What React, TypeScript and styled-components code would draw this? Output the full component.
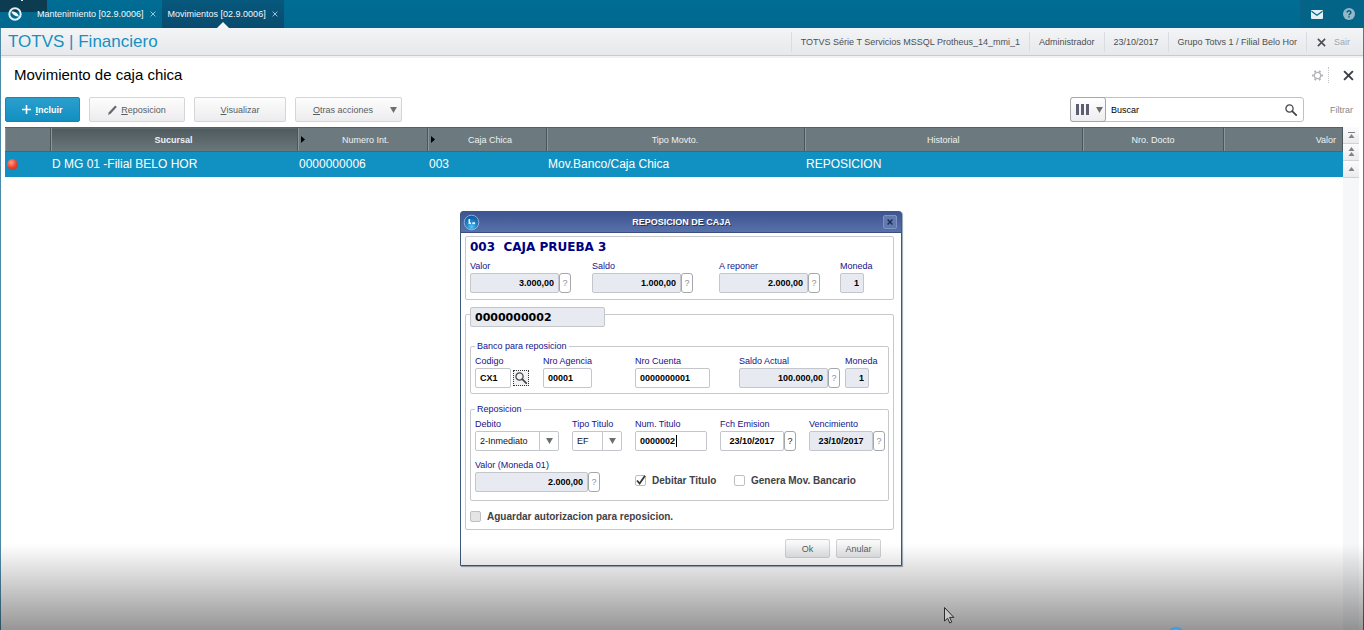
import React from "react";
import styled, { createGlobalStyle, css } from "styled-components";

const GlobalStyle = createGlobalStyle`
  *, *::before, *::after { box-sizing: border-box; }
  body { margin: 0; overflow: hidden; background: #fff; }
  body, button, input, select {
    font-family: "Liberation Sans", Arial, sans-serif;
    font-size: 9px;
  }
  button { cursor: pointer; }
`;

const Page = styled.div`
  display: flex;
  flex-direction: column;
  min-height: 100vh;
  border-left: 1px solid #4d8aa8;
  border-right: 1px solid #2f86a6;
  color: #4c4f54;
`;

/* ---------- Top bar ---------- */
const TopBar = styled.header`
  display: flex;
  height: 28px;
  margin: 0 -1px;
  background: linear-gradient(#006d94, #00688f);
`;

const Brand = styled.div`
  display: flex;
  align-items: center;
  width: 31px;
  padding-left: 8px;
  border-right: 1px solid #0a6286;
  svg { position: relative; z-index: 1; }
`;

const Tab = styled.div<{ $active?: boolean }>`
  display: flex;
  align-items: center;
  gap: 6px;
  padding: 0 6px;
  background: ${(p) => (p.$active ? "linear-gradient(#06597d, #0a4b6d)" : "transparent")};
  position: relative;
  ${(p) =>
    p.$active &&
    css`
      &::after {
        content: "";
        position: absolute;
        left: calc(50% - 6px);
        bottom: 0;
        border: 6px solid transparent;
        border-top: 0;
        border-bottom-color: #f4f6f8;
      }
    `}
`;

const TabLink = styled.a`
  color: #f2f8fb;
  text-decoration: none;
  white-space: nowrap;
`;

const TabClose = styled.button`
  display: flex;
  padding: 0;
  border: 0;
  background: none;
  color: #a9d0e0;
`;

const TopIcons = styled.div`
  display: flex;
  margin-left: auto;
`;

const TopIcon = styled.button`
  display: flex;
  align-items: center;
  justify-content: center;
  width: 32px;
  padding: 0;
  border: 0;
  border-left: 1px solid #08628a;
  background: #036488;
`;

const CornerShade = styled.div`
  position: absolute;
  top: 0;
  left: 0;
  width: 47px;
  height: 12px;
  background: rgba(18, 42, 56, 0.72);
  &::after {
    content: "";
    position: absolute;
    top: 0;
    left: 21px;
    width: 2px;
    height: 1px;
    background: #dfe6ea;
  }
`;

/* ---------- Module header ---------- */
const ModuleBar = styled.div`
  display: flex;
  align-items: center;
  height: 30px;
  padding: 0 2px 0 7px;
  border-bottom: 2px solid #eff1f3;
  background: linear-gradient(#f3f4f6, #e6e8eb);
  box-shadow: inset 0 -1px #c5ccd3;
`;

const ModuleName = styled.div`
  flex: 1;
  color: #1591c2;
  font-size: 17px;
  line-height: 20px;
`;

const Info = styled.span`
  padding: 0 9px;
  border-left: 1px solid #d9dde1;
  line-height: 20px;
  white-space: nowrap;
`;

const ExitButton = styled.button`
  display: flex;
  align-items: center;
  gap: 8px;
  height: 20px;
  padding: 0 11px 0 10px;
  border: 0;
  border-left: 1px solid #d9dde1;
  background: none;
  color: #a3a7ac;
`;

const TitleRow = styled.div`
  display: flex;
  align-items: center;
  height: 34px;
  padding: 0 9px 0 13px;
`;

const Title = styled.h1`
  flex: 1;
  margin: 0;
  color: #000;
  font-size: 15px;
  font-weight: 400;
  line-height: 18px;
`;

const IconButton = styled.button`
  display: flex;
  align-items: center;
  padding: 0;
  border: 0;
  background: none;
`;

const DottedRule = styled.span`
  height: 16px;
  margin: 0 14px 0 5px;
  border-left: 1px dotted #c4c4c4;
`;

/* ---------- Toolbar ---------- */
const Toolbar = styled.div`
  display: flex;
  align-items: center;
  gap: 9px;
  margin: 5px 0;
  padding: 0 10px 0 4px;
`;

const ToolButton = styled.button<{ $width: number; $primary?: boolean }>`
  display: flex;
  align-items: center;
  justify-content: center;
  gap: 4px;
  width: ${(p) => p.$width}px;
  height: 25px;
  padding: 0 4px;
  border: 1px solid ${(p) => (p.$primary ? "#1387b5" : "#d3d5d8")};
  border-radius: 2px;
  background: ${(p) =>
    p.$primary ? "linear-gradient(#2a9fce, #128fc0)" : "linear-gradient(#fdfdfd, #ececee)"};
  color: ${(p) => (p.$primary ? "#fff" : "#5a5d62")};
  font-weight: ${(p) => (p.$primary ? 700 : 400)};
`;

const Grow = styled.span`
  flex: 1;
`;

const SearchBox = styled.div`
  display: flex;
  width: 234px;
  height: 25px;
  margin-left: auto;
  border: 1px solid #bfc1c4;
  border-radius: 3px;
  background: #fff;
`;

const ColumnPicker = styled.button`
  display: flex;
  align-items: center;
  gap: 6px;
  width: 36px;
  margin: -1px 0 -1px -1px;
  padding: 0 0 0 5px;
  border: 1px solid #a4a6aa;
  border-radius: 3px;
  background: linear-gradient(#fff, #ededf0);
`;

const SearchInput = styled.input`
  flex: 1;
  min-width: 0;
  padding: 0 5px;
  border: 0;
  outline: 0;
  background: none;
  color: #000;
  &::placeholder { color: #000; opacity: 1; }
`;

const SearchButton = styled(IconButton)`
  padding-right: 6px;
`;

const FilterLink = styled.a`
  margin-left: 17px;
  color: #85888c;
  text-decoration: none;
`;

/* ---------- Browse table ---------- */
const Browse = styled.main`
  display: flex;
  flex: 1;
  padding: 0 4px;
`;

const TableArea = styled.div`
  flex: 1;
`;

const Table = styled.table`
  width: 100%;
  table-layout: fixed;
  border-collapse: collapse;
`;

const Th = styled.th<{ $sorted?: boolean; $align?: string }>`
  height: 24px;
  padding: 0 6px;
  border-right: 1px solid #4a5659;
  border-top: 1px solid #566164;
  border-bottom: 1px solid #566164;
  background: ${(p) => (p.$sorted ? "linear-gradient(#4e5a5d, #6a777b)" : "#6c7a7f")};
  box-shadow: inset 1px 0 #89969a;
  color: #eef2f3;
  font-weight: ${(p) => (p.$sorted ? 700 : 400)};
  text-align: ${(p) => p.$align ?? "center"};
`;

const ThInner = styled.span`
  display: flex;
  align-items: center;
  gap: 6px;
  margin-left: -3px;
`;

const Td = styled.td`
  height: 25px;
  padding: 0 2px;
  background: #1191c1;
  color: #fff;
  font-size: 12px;
  white-space: nowrap;
`;

const StatusDot = styled.span`
  display: block;
  width: 11px;
  height: 11px;
  border-radius: 50%;
  background: radial-gradient(circle at 38% 32%, #ff9d86, #ec4331 50%, #b52a20);
`;

const ScrollTrack = styled.div`
  width: 16px;
  background: #f6f7f9;
`;

const ScrollButton = styled.button`
  display: flex;
  align-items: center;
  justify-content: center;
  width: 100%;
  height: 17px;
  padding: 0;
  border: 0;
  border-bottom: 1px solid #d0d2d4;
  background: linear-gradient(#fbfbfb, #ebebed);
`;

/* ---------- Dialog ---------- */
const Dialog = styled.section`
  position: absolute;
  top: 211px;
  left: calc(50% - 222px);
  width: 442px;
  border: 1px solid #3d5a7c;
  border-radius: 3px 3px 0 0;
  background: #fff;
  box-shadow: 1px 1px 1px #9aa9b8;
`;

const DialogBar = styled.div`
  display: flex;
  align-items: center;
  height: 21px;
  padding: 0 4px 0 2px;
  border-bottom: 1px solid #3a4f80;
  background: linear-gradient(#3c5590, #5871ab);
`;

const DialogTitle = styled.h2`
  flex: 1;
  margin: 0;
  color: #fff;
  font-size: 9px;
  text-align: center;
  text-shadow: 1px 1px #26345a;
`;

const DialogClose = styled.button`
  display: flex;
  align-items: center;
  justify-content: center;
  width: 14px;
  height: 14px;
  padding: 0;
  border: 1px solid #7f93c2;
  border-radius: 2px;
  background: #6179af;
`;

const DialogBody = styled.form`
  padding: 3px 7px 7px 4px;
`;

const Panel = styled.div`
  border: 1px solid #c6c8cb;
  border-radius: 2px;
  padding: 4px 4px 6px;
  & + & {
    margin-top: 14px;
    padding-top: 0;
    padding-bottom: 7px;
  }
`;

const CashName = styled.h3`
  margin: 0 0 8px;
  color: #000080;
  font: 700 12px/12px "DejaVu Sans", sans-serif;
  white-space: pre;
`;

const NumberBox = styled.input`
  display: block;
  width: 135px;
  height: 20px;
  margin-top: -8px;
  padding: 0 4px;
  border: 1px solid #c3c6ca;
  border-radius: 2px;
  background: #e7eaf1;
  color: #000;
  font: 700 11px "DejaVu Sans", sans-serif;
`;

const Group = styled.fieldset`
  min-width: 0;
  margin: 14px 0 0;
  padding: 5px 4px;
  border: 1px solid #c6c8cb;
  border-radius: 2px;
  & + & { margin-top: 10px; padding-bottom: 8px; }
`;

const Legend = styled.legend`
  padding: 0 2px;
  color: #14148c;
  line-height: 10px;
`;

const FieldGrid = styled.div<{ $columns: string }>`
  display: grid;
  grid-template-columns: ${(p) => p.$columns};
  & + & { margin-top: 9px; }
`;

const FieldBox = styled.div`
  display: flex;
  flex-direction: column;
  gap: 2px;
`;

const Label = styled.label`
  color: #14148c;
  line-height: 10px;
  white-space: nowrap;
`;

const Control = styled.div`
  display: flex;
  align-items: center;
`;

const inputFrame = css`
  height: 20px;
  border: 1px solid #c3c6ca;
  border-radius: 2px;
`;

const Input = styled.input<{ $width: number; $align?: string }>`
  ${inputFrame}
  width: ${(p) => p.$width}px;
  padding: 0 4px;
  outline: 0;
  background: #fff;
  color: #000;
  font-weight: 700;
  text-align: ${(p) => p.$align ?? "left"};
  &:read-only { background: #e7eaf1; }
`;

const HelpButton = styled.button<{ $strong?: boolean }>`
  width: 12px;
  height: 20px;
  padding: 0;
  border: 1px solid #a5a7aa;
  border-radius: 3px;
  background: #fff;
  color: ${(p) => (p.$strong ? "#222" : "#8f9195")};
`;

const LookupButton = styled.button`
  display: flex;
  align-items: center;
  justify-content: center;
  width: 16px;
  height: 16px;
  margin-left: 2px;
  padding: 0;
  border: 1px dotted #333;
  background: #f2f2f2;
`;

const CaretFrame = styled.div`
  ${inputFrame}
  display: flex;
  align-items: center;
  width: 72px;
  padding: 0 4px;
`;

const BareInput = styled.input`
  width: 36px;
  padding: 0;
  border: 0;
  outline: 0;
  color: #000;
  font-weight: 700;
`;

const Caret = styled.span`
  width: 1px;
  height: 12px;
  background: #000;
`;

const SelectFrame = styled.div<{ $width: number }>`
  ${inputFrame}
  display: flex;
  width: ${(p) => p.$width}px;
`;

const Select = styled.select`
  flex: 1;
  min-width: 0;
  padding: 0 4px;
  border: 0;
  outline: 0;
  appearance: none;
  background: none;
  color: #111;
`;

const SelectArrow = styled.span`
  display: flex;
  align-items: center;
  justify-content: center;
  width: 19px;
  border-left: 1px solid #c3c6ca;
`;

const CheckLabel = styled.label<{ $inRow?: boolean }>`
  display: flex;
  align-items: center;
  align-self: end;
  gap: 6px;
  height: 12px;
  margin: ${(p) => (p.$inRow ? "0 0 6px" : "9px 0 0")};
  color: #3f4247;
  font-size: 10px;
  font-weight: 700;
  white-space: nowrap;
`;

const CheckStack = styled.span`
  display: grid;
  & > * { grid-area: 1 / 1; }
  svg { pointer-events: none; }
`;

const CheckInput = styled.input`
  appearance: none;
  width: 11px;
  height: 11px;
  margin: 0;
  border: 1px solid #bdbfc3;
  border-radius: 2px;
  background: #fff;
  &:disabled { background: #e4e4e4; }
`;

const Actions = styled.div`
  display: flex;
  justify-content: flex-end;
  gap: 6px;
  margin-top: 9px;
  padding-right: 13px;
`;

const ActionButton = styled.button`
  width: 45px;
  height: 19px;
  padding: 0;
  border: 1px solid #cfd1d4;
  border-radius: 2px;
  background: linear-gradient(#fafafa, #e4e5e7);
  color: #5a5d62;
`;

/* ---------- Overlays ---------- */
const BottomShade = styled.div`
  position: fixed;
  inset: auto 0 0 0;
  height: 86px;
  background: linear-gradient(rgba(0, 0, 0, 0), rgba(0, 0, 0, 0.41));
  pointer-events: none;
`;

const Pointer = styled.svg`
  position: fixed;
  left: 943px;
  top: 606px;
  pointer-events: none;
`;

const ProgressKnob = styled.svg`
  position: fixed;
  left: 1167px;
  bottom: 0;
  pointer-events: none;
`;

const Cross = ({ size, color, weight = 1 }: { size: number; color: string; weight?: number }) => (
  <svg width={size} height={size} viewBox="0 0 10 10" stroke={color} strokeWidth={weight} aria-hidden="true">
    <path d="M1 1L9 9M9 1L1 9" />
  </svg>
);

const Triangle = ({ size = 7, color = "#6c6e72" }: { size?: number; color?: string }) => (
  <svg width={size} height={size - 1} viewBox="0 0 8 7" fill={color} aria-hidden="true">
    <path d="M0 0H8L4 7Z" />
  </svg>
);

const Magnifier = ({ size }: { size: number }) => (
  <svg width={size} height={size} viewBox="0 0 12 12" fill="none" stroke="#44474c" aria-hidden="true">
    <circle cx="4.5" cy="4.5" r="3.6" strokeWidth="1.3" />
    <path d="M7.2 7.2L11.2 11.2" strokeWidth="1.8" strokeLinecap="round" />
  </svg>
);

const SortMark = () => (
  <svg width="4" height="7" viewBox="0 0 4 7" aria-hidden="true">
    <path d="M0 0L4 3.5L0 7Z" fill="#000" />
  </svg>
);

interface FieldProps {
  id: string;
  label: string;
  value: string;
  width: number;
  align?: "right" | "center";
  locked?: boolean;
  help?: "soft" | "strong";
  children?: React.ReactNode;
}

const Field = ({ id, label, value, width, align, locked, help, children }: FieldProps) => (
  <FieldBox>
    <Label htmlFor={id}>{label}</Label>
    <Control>
      <Input id={id} defaultValue={value} $width={width} $align={align} readOnly={locked} />
      {help && (
        <HelpButton type="button" $strong={help === "strong"}>
          ?
        </HelpButton>
      )}
      {children}
    </Control>
  </FieldBox>
);

const Choice = ({ id, label, value, width }: { id: string; label: string; value: string; width: number }) => (
  <FieldBox>
    <Label htmlFor={id}>{label}</Label>
    <SelectFrame $width={width}>
      <Select id={id} defaultValue={value}>
        <option>{value}</option>
      </Select>
      <SelectArrow>
        <Triangle />
      </SelectArrow>
    </SelectFrame>
  </FieldBox>
);

const Check = ({ label, checked, disabled, inRow }: { label: string; checked?: boolean; disabled?: boolean; inRow?: boolean }) => (
  <CheckLabel $inRow={inRow}>
    <CheckStack>
      <CheckInput type="checkbox" defaultChecked={checked} disabled={disabled} />
      {checked && (
        <svg width="11" height="11" viewBox="0 0 11 11" fill="none" stroke="#34373b" strokeWidth="1.8" aria-hidden="true">
          <path d="M2 5.5L4.6 8.6L10 0.8" />
        </svg>
      )}
    </CheckStack>
    {label}
  </CheckLabel>
);

const ReplenishDialog = () => (
  <Dialog role="dialog" aria-label="REPOSICION DE CAJA">
    <DialogBar>
      <svg width="17" height="17" viewBox="0 0 17 17" aria-hidden="true">
        <defs>
          <radialGradient id="orb" cx="50%" cy="80%" r="75%">
            <stop offset="0" stopColor="#58c4f0" />
            <stop offset="0.45" stopColor="#2288cc" />
            <stop offset="1" stopColor="#0f56a0" />
          </radialGradient>
        </defs>
        <circle cx="8.5" cy="8.5" r="7.3" fill="url(#orb)" stroke="#a9bfdc" strokeWidth="0.8" />
        <path d="M6.3 5V9.2H8" stroke="#e9f7ff" strokeWidth="1.5" fill="none" />
        <path d="M9.3 9.2H12" stroke="#e9f7ff" strokeWidth="1.8" />
      </svg>
      <DialogTitle>REPOSICION DE CAJA</DialogTitle>
      <DialogClose type="button" aria-label="Cerrar">
        <Cross size={6} color="#1d2b52" weight={2.4} />
      </DialogClose>
    </DialogBar>
    <DialogBody>
      <Panel>
        <CashName>{"003  CAJA PRUEBA 3"}</CashName>
        <FieldGrid $columns="122px 127px 121px auto">
          <Field id="valor" label="Valor" value="3.000,00" width={89} align="right" locked help="soft" />
          <Field id="saldo" label="Saldo" value="1.000,00" width={89} align="right" locked help="soft" />
          <Field id="reponer" label="A reponer" value="2.000,00" width={89} align="right" locked help="soft" />
          <Field id="moneda" label="Moneda" value="1" width={24} align="right" locked />
        </FieldGrid>
      </Panel>
      <Panel>
        <NumberBox defaultValue="0000000002" readOnly aria-label="Numero" />
        <Group>
          <Legend>Banco para reposicion</Legend>
          <FieldGrid $columns="68px 92px 104px 106px auto">
            <Field id="codigo" label="Codigo" value="CX1" width={36}>
              <LookupButton type="button" aria-label="Consultar">
                <Magnifier size={12} />
              </LookupButton>
            </Field>
            <Field id="agencia" label="Nro Agencia" value="00001" width={49} />
            <Field id="cuenta" label="Nro Cuenta" value="0000000001" width={75} />
            <Field id="saldoActual" label="Saldo Actual" value="100.000,00" width={89} align="right" locked help="soft" />
            <Field id="monedaBanco" label="Moneda" value="1" width={24} align="right" locked />
          </FieldGrid>
        </Group>
        <Group>
          <Legend>Reposicion</Legend>
          <FieldGrid $columns="97px 63px 85px 89px auto">
            <Choice id="debito" label="Debito" value="2-Inmediato" width={84} />
            <Choice id="tipo" label="Tipo Titulo" value="EF" width={50} />
            <FieldBox>
              <Label htmlFor="titulo">Num. Titulo</Label>
              <CaretFrame>
                <BareInput id="titulo" defaultValue="0000002" />
                <Caret />
              </CaretFrame>
            </FieldBox>
            <Field id="emision" label="Fch Emision" value="23/10/2017" width={64} align="center" help="strong" />
            <Field id="vencimiento" label="Vencimiento" value="23/10/2017" width={64} align="center" locked help="soft" />
          </FieldGrid>
          <FieldGrid $columns="160px 99px auto">
            <Field id="valorMoneda" label="Valor (Moneda 01)" value="2.000,00" width={113} align="right" locked help="soft" />
            <Check label="Debitar Titulo" checked inRow />
            <Check label="Genera Mov. Bancario" inRow />
          </FieldGrid>
        </Group>
        <Check label="Aguardar autorizacion para reposicion." disabled />
      </Panel>
      <Actions>
        <ActionButton type="button">Ok</ActionButton>
        <ActionButton type="button">Anular</ActionButton>
      </Actions>
    </DialogBody>
  </Dialog>
);

export default function App() {
  return (
    <>
      <GlobalStyle />
      <CornerShade />
      <Page>
        <TopBar>
          <Brand>
            <svg width="14" height="14" viewBox="0 0 14 14" fill="none" aria-hidden="true">
              <circle cx="7" cy="7" r="5.7" stroke="#e4eef3" strokeWidth="2" />
              <path d="M3.2 4.6C6 4 10 6 11 9.6C8 9.8 4.6 8 3.2 4.6Z" fill="#f4fafc" />
            </svg>
          </Brand>
          <Tab>
            <TabLink href="#mantenimiento">Mantenimiento [02.9.0006]</TabLink>
            <TabClose aria-label="Cerrar Mantenimiento">
              <Cross size={6} color="#9fcadb" weight={1.6} />
            </TabClose>
          </Tab>
          <Tab $active>
            <TabLink href="#movimientos">Movimientos [02.9.0006]</TabLink>
            <TabClose aria-label="Cerrar Movimientos">
              <Cross size={6} color="#9fcadb" weight={1.6} />
            </TabClose>
          </Tab>
          <TopIcons>
            <TopIcon aria-label="Mensajes">
              <svg width="12" height="9" viewBox="0 0 12 9" aria-hidden="true">
                <rect width="12" height="9" rx="1" fill="#e3f1f6" />
                <path d="M0.5 1.2L6 5.2L11.5 1.2" fill="none" stroke="#036488" strokeWidth="1.1" />
              </svg>
            </TopIcon>
            <TopIcon aria-label="Ayuda">
              <svg width="12" height="12" viewBox="0 0 12 12" fill="none" aria-hidden="true">
                <circle cx="6" cy="6" r="6" fill="#93b8c8" />
                <path d="M4.1 4.6C4.1 2.2 7.9 2.2 7.9 4.5C7.9 5.8 6 5.8 6 7.3M6 8.3V9.6" stroke="#045a7b" strokeWidth="1.4" />
              </svg>
            </TopIcon>
          </TopIcons>
        </TopBar>

        <ModuleBar>
          <ModuleName>TOTVS | Financiero</ModuleName>
          <Info>TOTVS Série T Servicios MSSQL Protheus_14_mmi_1</Info>
          <Info>Administrador</Info>
          <Info>23/10/2017</Info>
          <Info>Grupo Totvs 1 / Filial Belo Hor</Info>
          <ExitButton>
            <Cross size={9} color="#4b4e54" weight={1.8} />
            Sair
          </ExitButton>
        </ModuleBar>

        <TitleRow>
          <Title>Movimiento de caja chica</Title>
          <IconButton aria-label="Configurar">
            <svg width="11" height="11" viewBox="0 0 11 11" fill="none" stroke="#b2b4b7" aria-hidden="true">
              <circle cx="5.5" cy="5.5" r="3.2" strokeWidth="1.3" />
              <path
                d="M9.2 5.5H11M0 5.5H1.8M7.35 8.7L8.2 10.2M2.8 0.8L3.65 2.3M7.35 2.3L8.2 0.8M2.8 10.2L3.65 8.7"
                strokeWidth="2"
              />
            </svg>
          </IconButton>
          <DottedRule />
          <IconButton aria-label="Cerrar">
            <Cross size={11} color="#3c3f45" weight={1.8} />
          </IconButton>
        </TitleRow>

        <Toolbar>
          <ToolButton $width={75} $primary>
            <svg width="9" height="9" viewBox="0 0 9 9" stroke="#fff" strokeWidth="1.6" aria-hidden="true">
              <path d="M4.5 0V9M0 4.5H9" />
            </svg>
            <span><u>I</u>ncluir</span>
          </ToolButton>
          <ToolButton $width={96}>
            <svg width="9" height="10" viewBox="0 0 9 10" aria-hidden="true">
              <path d="M0 10L0.9 7.2L7.2 0.6L8.8 2.1L2.6 8.8Z" fill="#66696d" />
            </svg>
            <span><u>R</u>eposicion</span>
          </ToolButton>
          <ToolButton $width={92}>
            <span><u>V</u>isualizar</span>
          </ToolButton>
          <ToolButton $width={107}>
            <Grow><u>O</u>tras acciones</Grow>
            <Triangle />
          </ToolButton>
          <SearchBox>
            <ColumnPicker aria-label="Columnas">
              <svg width="14" height="11" viewBox="0 0 14 11" fill="#5c5f72" aria-hidden="true">
                <path d="M0 0H3V11H0ZM5 0H8V11H5ZM10 0H13V11H10Z" />
              </svg>
              <Triangle />
            </ColumnPicker>
            <SearchInput placeholder="Buscar" aria-label="Buscar" />
            <SearchButton aria-label="Buscar">
              <Magnifier size={12} />
            </SearchButton>
          </SearchBox>
          <FilterLink href="#filtrar">Filtrar</FilterLink>
        </Toolbar>

        <Browse>
          <TableArea>
            <Table>
              <colgroup>
                <col width="45" />
                <col width="247" />
                <col width="130" />
                <col width="119" />
                <col width="258" />
                <col />
                <col width="141" />
                <col width="119" />
              </colgroup>
              <thead>
                <tr>
                  <Th aria-label="Estado" />
                  <Th $sorted>Sucursal</Th>
                  <Th>
                    <ThInner><SortMark /><Grow>Numero Int.</Grow></ThInner>
                  </Th>
                  <Th>
                    <ThInner><SortMark /><Grow>Caja Chica</Grow></ThInner>
                  </Th>
                  <Th>Tipo Movto.</Th>
                  <Th>Historial</Th>
                  <Th>Nro. Docto</Th>
                  <Th $align="right">Valor</Th>
                </tr>
              </thead>
              <tbody>
                <tr>
                  <Td><StatusDot /></Td>
                  <Td>D MG 01 -Filial BELO HOR</Td>
                  <Td>0000000006</Td>
                  <Td>003</Td>
                  <Td>Mov.Banco/Caja Chica</Td>
                  <Td>REPOSICION</Td>
                  <Td />
                  <Td />
                </tr>
              </tbody>
            </Table>
          </TableArea>
          <ScrollTrack>
            <ScrollButton aria-label="Primero">
              <svg width="7" height="7" viewBox="0 0 7 7" fill="#808285" aria-hidden="true">
                <path d="M0 0H7V1H0ZM3.5 2L6.5 6H0.5Z" />
              </svg>
            </ScrollButton>
            <ScrollButton aria-label="Pagina anterior">
              <svg width="7" height="10" viewBox="0 0 7 10" fill="#808285" aria-hidden="true">
                <path d="M3.5 0L6.5 4H0.5ZM3.5 5L6.5 9H0.5Z" />
              </svg>
            </ScrollButton>
            <ScrollButton aria-label="Anterior">
              <svg width="7" height="5" viewBox="0 0 7 5" fill="#808285" aria-hidden="true">
                <path d="M3.5 0L6.5 4H0.5Z" />
              </svg>
            </ScrollButton>
          </ScrollTrack>
        </Browse>
      </Page>

      <ReplenishDialog />
      <BottomShade />
      <Pointer width="12" height="18" viewBox="0 0 12 18" aria-hidden="true">
        <path d="M1.5 1.5V15L4.6 12.2L6.8 17L8.8 16L6.6 11.4H10.8Z" fill="#c9c9c9" stroke="#2c2c2c" strokeWidth="1" />
      </Pointer>
      <ProgressKnob width="18" height="3" viewBox="0 0 18 3" aria-hidden="true">
        <circle cx="9" cy="10" r="9" fill="none" stroke="#3c9be8" strokeWidth="2" />
      </ProgressKnob>
    </>
  );
}
